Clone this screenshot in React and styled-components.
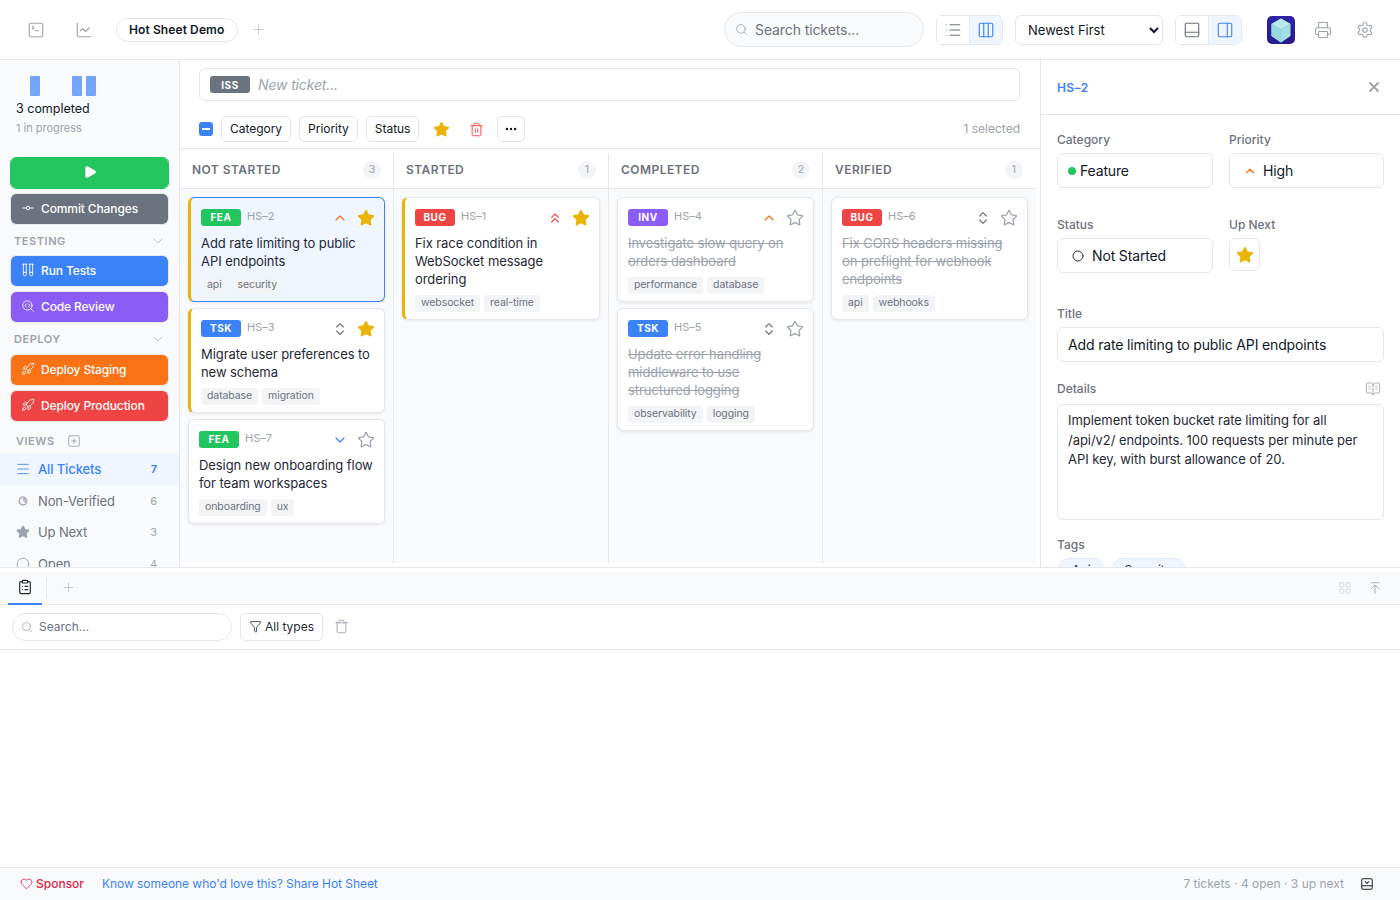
import React from "react";
import styled, { createGlobalStyle, css } from "styled-components";
import {
  SquareTerminal, ChartLine, Plus, Search, List, Columns3, PanelBottom, PanelRight, Printer, Settings, X, Star,
  ChevronUp, ChevronsUp, ChevronsUpDown, ChevronDown, Play, GitCommitHorizontal, TestTubes, SearchCode, Rocket,
  Menu, SquarePlus, Trash, Ellipsis, BookOpenText, ClipboardList, Funnel, Heart, LayoutGrid, ArrowUpToLine,
  PanelBottomClose, Circle, Trash2,
} from "lucide-react";

const Global = createGlobalStyle`
  html, body { margin: 0; padding: 0; height: 100%; background: #fff; }
  body { font-family: Inter, "Noto Sans", sans-serif; color: #111827; overflow: hidden; }
  * { box-sizing: border-box; }
`;

const Page = styled.div`display: flex; flex-direction: column; height: 100vh; width: 1400px;`;

const Header = styled.header`
  height: 60px; flex: none; display: flex; align-items: center; padding: 0 19px 0 20px;
  border-bottom: 1px solid #e5e7eb; background: #fff;
`;
const IconButton = styled.span`
  display: inline-flex; align-items: center; justify-content: center; width: ${p => p.$w || 32}px; height: 32px;
  color: ${p => p.$color || "#9ca3af"}; margin-left: ${p => p.$ml || 0}px; flex: none;
`;
const ProjectPill = styled.div`
  height: 24px; width: 122px; margin-left: 16px; padding: 0 12px; border: 1px solid #e5e7eb; border-radius: 12px; white-space: nowrap;
  display: flex; align-items: center; font-size: 12px; font-weight: 600; letter-spacing: .1px; color: #111827;
`;
const SearchBox = styled.div`
  width: 200px; height: 35px; margin-left: auto; display: flex; align-items: center; gap: 7px; padding: 0 10px;
  border: 1px solid #e5e7eb; border-radius: 18px; background: #f9fafb; font-size: 14px; letter-spacing: -.1px; color: #6b7280;
`;
const Toggle = styled.div`
  display: flex; height: 30px; width: 67px; margin-left: 12px; border: 1px solid #e5e7eb; border-radius: 6px; overflow: hidden;
`;
const ToggleSeg = styled.span`
  flex: 1; display: flex; align-items: center; justify-content: center;
  color: ${p => p.$active ? "#3b82f6" : "#6b7280"}; background: ${p => p.$active ? "#eff6ff" : "#fff"};
  & + & { border-left: 1px solid #e5e7eb; }
`;
const SortSelect = styled.select`
  width: 148px; height: 30px; margin-left: 12px; padding: 0 4px 0 8px; border: 1px solid #e5e7eb; border-radius: 6px;
  background: #fff; font: 13px Inter, sans-serif; color: #111827;
`;
const Logo = styled.svg`width: 28px; height: 28px; margin-left: 25px; flex: none;`;

const Middle = styled.div`flex: 1; min-height: 0; display: flex;`;

const Sidebar = styled.aside`
  width: 180px; flex: none; overflow: hidden; background: #f9fafb; border-right: 1px solid #e5e7eb; padding-top: 16px;
`;
const Bars = styled.div`display: flex; gap: 4px; height: 20px; padding-left: 16px; align-items: flex-end;`;
const Bar = styled.span`width: 10px; background: #3b82f6; opacity: .7; border-radius: 1px; flex: none;`;
const StatMain = styled.div`margin: 4px 0 0 16px; font-size: 12.5px; line-height: 18px; font-weight: 400; color: #111827;`;
const StatSub = styled.div`margin: 2px 0 0 16px; font-size: 11px; line-height: 16px; color: #9ca3af;`;
const SideButtons = styled.div`padding: 0 10px; display: flex; flex-direction: column; gap: 4px; margin-top: ${p => p.$mt || 0}px;`;
const ActionButton = styled.div`
  height: 32px; border-radius: 6px; background: ${p => p.$bg}; background-clip: padding-box; color: #fff;
  border: 1px solid ${p => p.$solid ? p.$bg : "#e5e7eb"};
  display: flex; align-items: center; gap: 6px; padding: 0 0 2px ${p => p.$center ? 0 : 10}px; font-size: 12px; font-weight: 500; letter-spacing: -.12px;
  justify-content: ${p => p.$center ? "center" : "flex-start"};
`;
const GroupHead = styled.div`
  height: ${p => p.$h || 30}px; padding: ${p => p.$pt || 0}px 13px 0 14px; display: flex; align-items: center; justify-content: space-between;
  font-size: 11px; font-weight: 600; letter-spacing: .55px; color: #9ca3af;
`;
const ViewsHead = styled.div`
  height: 32px; padding: 6px 0 0 16px; display: flex; align-items: center; gap: 12px;
  font-size: 11px; font-weight: 600; letter-spacing: .5px; color: #9ca3af;
`;
const ViewRow = styled.div`
  height: ${p => p.$active ? 32 : 31.5}px; display: flex; align-items: center; padding: 0 22px 2px 14px; gap: 7px; font-size: 13px; letter-spacing: -.12px;
  background: ${p => p.$active ? "#eff6ff" : "transparent"}; color: ${p => p.$active ? "#3b82f6" : "#6b7280"};
  font-weight: ${p => p.$active ? 500 : 400};
`;
const ViewIcon = styled.span`width: 17px; display: flex; justify-content: center; color: ${p => p.$active ? "#3b82f6" : "#9ca3af"}; flex: none;`;
const ViewCount = styled.span`margin-left: auto; font-size: 11px; letter-spacing: 0; color: ${p => p.$active ? "#3b82f6" : "#9ca3af"}; font-weight: ${p => p.$active ? 600 : 400};`;

const Main = styled.main`flex: 1; min-width: 0; display: flex; flex-direction: column; background: #fff;`;
const NewTicket = styled.div`
  height: 33px; margin: 8px 20px 0 19px; border: 1px solid #e5e7eb; border-radius: 6px; display: flex; align-items: center;
  gap: 8px; padding-left: 10px; font-size: 14px; font-style: italic; letter-spacing: -.15px; color: #9ca3af;
`;
const IssBadge = styled.span`
  width: 40px; height: 17px; border-radius: 3px; background: #6b7280; color: #fff; font-size: 10px; font-style: normal; font-weight: 700;
  letter-spacing: .5px; display: flex; align-items: center; justify-content: center;
`;
const ActionBar = styled.div`
  height: 48px; flex: none; padding: 15px 20px 0 19px; display: flex; align-items: flex-start; border-bottom: 1px solid #e5e7eb;
`;
const Check = styled.span`
  width: 14px; height: 14px; margin: 6px 8px 0 0; border-radius: 3px; background: #3b82f6; display: flex; align-items: center; justify-content: center;
  &::after { content: ""; width: 8px; height: 2px; background: #fff; }
`;
const ChipButton = styled.span`
  height: 26px; padding: 0 ${p => p.$pad ?? 8}px 1px; margin-right: 8px; border: 1px solid #e5e7eb; border-radius: 5px; display: flex;
  align-items: center; font-size: 12px; letter-spacing: -.03px; color: #111827; background: #fff;
`;
const BarIcon = styled.span`
  width: ${p => p.$w}px; height: 26px; display: flex; align-items: center; justify-content: center; margin-right: ${p => p.$mr || 0}px;
`;
const SelectedNote = styled.span`margin-left: auto; font-size: 12px; line-height: 25px; color: #9ca3af;`;

const Board = styled.div`
  flex: 1; min-height: 0; display: grid; grid-template-columns: 214px 215px 214px 213px; padding: 4px 0 4px 0;
`;
const Column = styled.section`
  min-width: 0; display: flex; flex-direction: column; background: #f9fafb;
  ${p => !p.$last && css`border-right: 1px solid #e5e7eb;`}
`;
const ColumnHead = styled.div`
  height: 36px; flex: none; padding: 0 ${p => p.$last ? 13 : 12}px 2px 12px; display: flex; align-items: center; justify-content: space-between;
  background: #fff; border-bottom: 1px solid #e5e7eb; font-size: 12px; font-weight: 600; letter-spacing: .45px; color: #6b7280;
`;
const Count = styled.span`
  width: 18px; height: 18px; border-radius: 50%; background: #f3f4f6; color: #9ca3af; font-size: 10.5px; font-weight: 400; letter-spacing: 0;
  display: flex; align-items: center; justify-content: center;
`;
const CardList = styled.div`padding: 8px; display: flex; flex-direction: column; gap: 6px;`;
const Card = styled.article`
  padding: 11px 10px 7px; border: 1px solid ${p => p.$selected ? "#3b82f6" : "#e5e7eb"}; border-radius: 6px;
  background: ${p => p.$selected ? "#eff6ff" : "#fff"}; box-shadow: 0 1px 3px rgba(0,0,0,.08);
  ${p => p.$upNext && css`border-left: 3px solid #eab308;`}
`;
const CardTop = styled.div`display: flex; align-items: flex-start; height: 17px; margin-bottom: 8px;`;
const Badge = styled.span`
  width: 40px; height: 17px; padding-bottom: 1px; border-radius: 3px; background: ${p => p.$bg}; color: #fff; font-size: 10px; font-weight: 700; letter-spacing: .6px;
  display: flex; align-items: center; justify-content: center; margin-right: 6px;
`;
const TicketId = styled.span`font-size: 11px; line-height: 15px; color: #9ca3af;`;
const Prio = styled.span`margin-left: auto; width: 16px; height: 18px; display: flex; align-items: center; justify-content: center; color: ${p => p.$color}; margin-right: 9px;`;
const StarSlot = styled.span`display: flex; height: 18px; align-items: center; margin-right: -1px;`;
const CardTitle = styled.div`
  font-size: 13px; line-height: 18px; letter-spacing: -.07px; color: ${p => p.$done ? "#9ca3af" : "#1f2937"};
  ${p => p.$done && css`text-decoration: line-through;`}
`;
const Tags = styled.div`display: flex; gap: 4px; margin-top: 7px;`;
const Tag = styled.span`
  height: 17px; padding: 0 6px 2px; border-radius: 3px; background: #f3f4f6; color: #6b7280; font-size: 10.5px; letter-spacing: -.09px; display: flex; align-items: center;
`;

const Detail = styled.aside`width: 360px; flex: none; overflow: hidden; border-left: 1px solid #e5e7eb; background: #fff;`;
const DetailHead = styled.div`
  height: 55px; padding: 0 18px 0 16px; display: flex; align-items: center; justify-content: space-between; border-bottom: 1px solid #e5e7eb;
  font-size: 12px; font-weight: 600; letter-spacing: .35px; color: #3b82f6;
`;
const DetailBody = styled.div`padding: 16px 16px 0;`;
const FieldGrid = styled.div`display: grid; grid-template-columns: 156px 155px; gap: 16px; margin-top: ${p => p.$mt || 0}px;`;
const FieldWrap = styled.div`margin-top: ${p => p.$mt || 0}px;`;
const Label = styled.div`
  height: 18px; margin-bottom: ${p => p.$mb || 4}px; font-size: 12px; line-height: 18px; color: #6b7280; font-weight: 500;
  display: flex; justify-content: space-between; align-items: center; padding-right: ${p => p.$pr || 0}px;
`;
const Field = styled.div`
  height: 35px; border: 1px solid #e5e7eb; border-radius: 6px; display: flex; align-items: center; padding-left: ${p => p.$pl ?? 10}px;
  gap: ${p => p.$gap ?? 4}px; font-size: 14px; letter-spacing: -.15px; color: #111827;
`;
const Dot = styled.span`width: 8px; height: 8px; border-radius: 50%; background: #22c55e;`;
const StarField = styled.div`
  width: 31px; height: 33px; border: 1px solid #e5e7eb; border-radius: 6px; display: flex; align-items: center; justify-content: center;
`;
const TextArea = styled.div`
  height: 116px; border: 1px solid #e5e7eb; border-radius: 6px; padding: 6px 10px; font-size: 13px; line-height: 19.5px; letter-spacing: -.05px; color: #1f2937;
`;
const TagChips = styled.div`display: flex; gap: 6px; padding-left: 1px;`;
const TagChip = styled.span`
  height: 24px; padding: 0 13px; border: 1px solid #dbeafe; border-radius: 12px; background: #eff6ff; font-size: 12px; line-height: 22px; color: #1f2937;
`;

const BottomPanel = styled.section`height: 300px; flex: none; display: flex; flex-direction: column; border-top: 1px solid #e5e7eb; background: #fff; padding-top: 4px;`;
const TabBar = styled.div`
  height: 33px; flex: none; display: flex; align-items: stretch; padding: 0 16px 0 8px; background: #f9fafb; border-bottom: 1px solid #e5e7eb;
`;
const Tab = styled.span`
  width: 34px; display: flex; align-items: center; justify-content: center; padding-bottom: 1px; color: #1f2937; border-bottom: 2px solid #3b82f6; margin-bottom: -1px;
`;
const TabDivider = styled.span`width: 1px; height: 20px; margin: 6px 0 0 4px; background: #e5e7eb;`;
const TabTool = styled.span`
  width: ${p => p.$w}px; margin-left: ${p => p.$auto ? "auto" : `${p.$ml || 0}px`}; padding-bottom: ${p => p.$pb || 0}px; display: flex; align-items: center; justify-content: center; color: ${p => p.$color};
`;
const LogTools = styled.div`
  height: 45px; flex: none; display: flex; align-items: center; padding: 0 12px; gap: 8px; border-bottom: 1px solid #e5e7eb;
`;
const LogSearch = styled.div`
  width: 220px; height: 28px; border: 1px solid #e5e7eb; border-radius: 14px; padding: 0 8px 1px; display: flex; align-items: center; gap: 6px;
  font-size: 12px; color: #6b7280;
`;
const FilterButton = styled.div`
  width: 83px; height: 28px; padding-bottom: 1px; border: 1px solid #e5e7eb; border-radius: 5px; display: flex; align-items: center; justify-content: center; gap: 3px;
  font-size: 12px; color: #1f2937;
`;
const LogTrash = styled.span`display: flex; margin: 0 0 1px 3px; color: #9ca3af;`;

const Footer = styled.footer`
  height: 33px; flex: none; display: flex; align-items: center; padding: 0 26px 1px 20px; background: #f9fafb; border-top: 1px solid #e5e7eb; font-size: 12px;
`;
const Sponsor = styled.span`display: flex; align-items: center; gap: 3px; color: #e11d48; font-weight: 500;`;
const ShareLink = styled.span`margin-left: 18px; letter-spacing: -.05px; color: #3b82f6;`;
const FooterStat = styled.span`margin-left: auto; color: #9ca3af;`;
const FooterIcon = styled.span`display: flex; margin-left: 16px; color: #1f2937;`;

const barHeights = [0, 20, 0, 0, 20, 20, 0];
const typeColors = { FEA: "#22c55e", BUG: "#ef4444", TSK: "#3b82f6", INV: "#8b5cf6" };
const prios = {
  high: { Icon: ChevronUp, color: "#f97316" },
  urgent: { Icon: ChevronsUp, color: "#ef4444" },
  normal: { Icon: ChevronsUpDown, color: "#6b7280" },
  low: { Icon: ChevronDown, color: "#3b82f6" },
};
const columns = [
  { name: "NOT STARTED", tickets: [
    { type: "FEA", id: "HS–2", prio: "high", star: 1, selected: 1, title: "Add rate limiting to public API endpoints", tags: ["api", "security"] },
    { type: "TSK", id: "HS–3", prio: "normal", star: 1, title: "Migrate user preferences to new schema", tags: ["database", "migration"] },
    { type: "FEA", id: "HS–7", prio: "low", title: "Design new onboarding flow for team workspaces", tags: ["onboarding", "ux"] },
  ]},
  { name: "STARTED", tickets: [
    { type: "BUG", id: "HS–1", prio: "urgent", star: 1, title: "Fix race condition in WebSocket message ordering", tags: ["websocket", "real-time"] },
  ]},
  { name: "COMPLETED", tickets: [
    { type: "INV", id: "HS–4", prio: "high", done: 1, title: "Investigate slow query on orders dashboard", tags: ["performance", "database"] },
    { type: "TSK", id: "HS–5", prio: "normal", done: 1, title: "Update error handling middleware to use structured logging", tags: ["observability", "logging"] },
  ]},
  { name: "VERIFIED", tickets: [
    { type: "BUG", id: "HS–6", prio: "normal", done: 1, title: "Fix CORS headers missing on preflight for webhook endpoints", tags: ["api", "webhooks"] },
  ]},
];

const StarIcon = ({ on, size = 18 }) => (
  <Star size={size} strokeWidth={on ? 1.5 : 1.75} color={on ? "#eab308" : "#9ca3af"} fill={on ? "#eab308" : "none"} />
);

const PieIcon = () => (
  <svg width="12" height="12" viewBox="0 0 12 12" fill="none">
    <circle cx="6" cy="6" r="3.9" stroke="#9ca3af" strokeWidth="1.2" />
    <path d="M6 6V2.1A3.9 3.9 0 0 1 8.800 8.700Z" fill="#b6bcc6" />
  </svg>
);

const TicketCard = ({ t }) => {
  const { Icon, color } = prios[t.prio];
  return (
    <Card $upNext={t.star} $selected={t.selected}>
      <CardTop>
        <Badge $bg={typeColors[t.type]}>{t.type}</Badge>
        <TicketId>{t.id}</TicketId>
        <Prio $color={color}><Icon size={16} strokeWidth={1.75} /></Prio>
        <StarSlot><StarIcon on={t.star} /></StarSlot>
      </CardTop>
      <CardTitle $done={t.done}>{t.title}</CardTitle>
      <Tags>{t.tags.map(x => <Tag key={x}>{x}</Tag>)}</Tags>
    </Card>
  );
};

export default function App() {
  return (
    <Page>
      <Global />
      <Header>
        <IconButton><SquareTerminal size={18} strokeWidth={1.5} /></IconButton>
        <IconButton $ml={16}><ChartLine size={18} strokeWidth={1.5} /></IconButton>
        <ProjectPill>Hot Sheet Demo</ProjectPill>
        <IconButton $w={20} $ml={10}><Plus size={15} strokeWidth={1.5} color="#c2c7cf" /></IconButton>
        <SearchBox><Search size={13} strokeWidth={1.5} color="#9ca3af" />Search tickets...</SearchBox>
        <Toggle>
          <ToggleSeg><List size={18} strokeWidth={1.5} /></ToggleSeg>
          <ToggleSeg $active><Columns3 size={18} strokeWidth={1.5} /></ToggleSeg>
        </Toggle>
        <SortSelect defaultValue="newest"><option value="newest">Newest First</option></SortSelect>
        <Toggle>
          <ToggleSeg><PanelBottom size={18} strokeWidth={1.5} /></ToggleSeg>
          <ToggleSeg $active><PanelRight size={18} strokeWidth={1.5} /></ToggleSeg>
        </Toggle>
        <Logo viewBox="0 0 28 28">
          <defs>
            <linearGradient id="lg" x1="0" y1="0" x2="0" y2="1">
              <stop offset="0" stopColor="#2e22a8" />
              <stop offset="1" stopColor="#2a1a8c" />
            </linearGradient>
          </defs>
          <rect width="28" height="28" rx="5" fill="url(#lg)" />
          <path d="M14 2.500l9.500 5.500v12L14 26.500 4.500 20V8z" fill="#a3dfe4" />
          <path d="M14 2.500L23.500 8 14 13.500 4.500 8z" fill="#b7e8ea" />
          <path d="M14 13.500v13L4.500 20V8z" fill="#97d8e0" />
          <path d="M14 13.500L23.500 8M14 13.500L4.500 8M14 13.500v13" stroke="#7fcad6" strokeWidth=".6" fill="none" />
        </Logo>
        <IconButton $ml={12}><Printer size={18} strokeWidth={1.5} /></IconButton>
        <IconButton $ml={10}><Settings size={18} strokeWidth={1.5} /></IconButton>
      </Header>

      <Middle>
        <Sidebar>
          <Bars>{barHeights.map((h, i) => <Bar key={i} style={{ height: h }} />)}</Bars>
          <StatMain>3 completed</StatMain>
          <StatSub>1 in progress</StatSub>
          <SideButtons $mt={21}>
            <ActionButton $bg="#22c55e" $solid $center><Play size={14} color="#fff" fill="#fff" /></ActionButton>
            <ActionButton $bg="#6b7280"><GitCommitHorizontal size={14} strokeWidth={1.5} />Commit Changes</ActionButton>
          </SideButtons>
          <GroupHead $pt={2}>TESTING<ChevronDown size={16} strokeWidth={1.5} color="#c2c7cf" /></GroupHead>
          <SideButtons>
            <ActionButton $bg="#3b82f6"><TestTubes size={14} strokeWidth={1.5} />Run Tests</ActionButton>
            <ActionButton $bg="#8b5cf6"><SearchCode size={14} strokeWidth={1.5} />Code Review</ActionButton>
          </SideButtons>
          <GroupHead $h={31}>DEPLOY<ChevronDown size={16} strokeWidth={1.5} color="#c2c7cf" /></GroupHead>
          <SideButtons>
            <ActionButton $bg="#f97316"><Rocket size={14} strokeWidth={1.5} />Deploy Staging</ActionButton>
            <ActionButton $bg="#ef4444"><Rocket size={14} strokeWidth={1.5} />Deploy Production</ActionButton>
          </SideButtons>
          <ViewsHead>VIEWS<SquarePlus size={14} strokeWidth={1.5} color="#9ca3af" /></ViewsHead>
          <ViewRow $active><ViewIcon $active><Menu size={16} strokeWidth={1.25} /></ViewIcon>All Tickets<ViewCount $active>7</ViewCount></ViewRow>
          <ViewRow><ViewIcon><PieIcon /></ViewIcon>Non-Verified<ViewCount>6</ViewCount></ViewRow>
          <ViewRow><ViewIcon><Star size={14} fill="#9ca3af" /></ViewIcon>Up Next<ViewCount>3</ViewCount></ViewRow>
          <ViewRow><ViewIcon><Circle size={14} strokeWidth={1.5} /></ViewIcon>Open<ViewCount>4</ViewCount></ViewRow>
        </Sidebar>

        <Main>
          <NewTicket><IssBadge>ISS</IssBadge>New ticket...</NewTicket>
          <ActionBar>
            <Check />
            <ChipButton>Category</ChipButton>
            <ChipButton>Priority</ChipButton>
            <ChipButton>Status</ChipButton>
            <BarIcon $w={28} $mr={7}><Star size={17} color="#eab308" fill="#eab308" strokeWidth={1.5} /></BarIcon>
            <BarIcon $w={28} $mr={7}><Trash2 size={15} color="#ef4444" strokeWidth={1.5} /></BarIcon>
            <ChipButton $pad={6}><Ellipsis size={14} strokeWidth={2.25} /></ChipButton>
            <SelectedNote>1 selected</SelectedNote>
          </ActionBar>
          <Board>
            {columns.map((c, i) => (
              <Column key={c.name} $last={i === columns.length - 1}>
                <ColumnHead $last={i === columns.length - 1}>{c.name}<Count>{c.tickets.length}</Count></ColumnHead>
                <CardList>{c.tickets.map(t => <TicketCard key={t.id} t={t} />)}</CardList>
              </Column>
            ))}
          </Board>
        </Main>

        <Detail>
          <DetailHead>HS–2<X size={16} strokeWidth={2.75} color="#9ca3af" /></DetailHead>
          <DetailBody>
            <FieldGrid>
              <div><Label>Category</Label><Field><Dot />Feature</Field></div>
              <div><Label>Priority</Label><Field $pl={13} $gap={6}><ChevronUp size={14} strokeWidth={2.25} color="#f97316" />High</Field></div>
            </FieldGrid>
            <FieldGrid $mt={28}>
              <div><Label>Status</Label><Field $pl={14} $gap={8}><Circle size={12} strokeWidth={1.75} />Not Started</Field></div>
              <div><Label>Up Next</Label><StarField><StarIcon on /></StarField></div>
            </FieldGrid>
            <FieldWrap $mt={32}><Label>Title</Label><Field>Add rate limiting to public API endpoints</Field></FieldWrap>
            <FieldWrap $mt={18}>
              <Label $mb={6} $pr={3}>Details<BookOpenText size={16} strokeWidth={1.25} color="#9ca3af" /></Label>
              <TextArea>Implement token bucket rate limiting for all /api/v2/ endpoints. 100 requests per minute per API key, with burst allowance of 20.</TextArea>
            </FieldWrap>
            <FieldWrap $mt={16}>
              <Label>Tags</Label>
              <TagChips><TagChip>Api</TagChip><TagChip>Security</TagChip></TagChips>
            </FieldWrap>
          </DetailBody>
        </Detail>
      </Middle>

      <BottomPanel>
        <TabBar>
          <Tab><ClipboardList size={16} strokeWidth={1.75} /></Tab>
          <TabDivider />
          <TabTool $w={42} $pb={1}><Plus size={15} strokeWidth={1.5} color="#c2c7cf" /></TabTool>
          <TabTool $w={18} $auto $color="#d1d5db"><LayoutGrid size={14} strokeWidth={1.5} /></TabTool>
          <TabTool $w={18} $ml={12} $color="#9ca3af"><ArrowUpToLine size={14} strokeWidth={1.5} /></TabTool>
        </TabBar>
        <LogTools>
          <LogSearch><Search size={12} strokeWidth={1.5} color="#9ca3af" />Search...</LogSearch>
          <FilterButton><Funnel size={13} strokeWidth={1.5} />All types</FilterButton>
          <LogTrash><Trash size={15} strokeWidth={1.5} /></LogTrash>
        </LogTools>
      </BottomPanel>

      <Footer>
        <Sponsor><Heart size={13} strokeWidth={1.5} />Sponsor</Sponsor>
        <ShareLink>Know someone who'd love this? Share Hot Sheet</ShareLink>
        <FooterStat>7 tickets · 4 open · 3 up next</FooterStat>
        <FooterIcon><PanelBottomClose size={14} strokeWidth={1.75} /></FooterIcon>
      </Footer>
    </Page>
  );
}
